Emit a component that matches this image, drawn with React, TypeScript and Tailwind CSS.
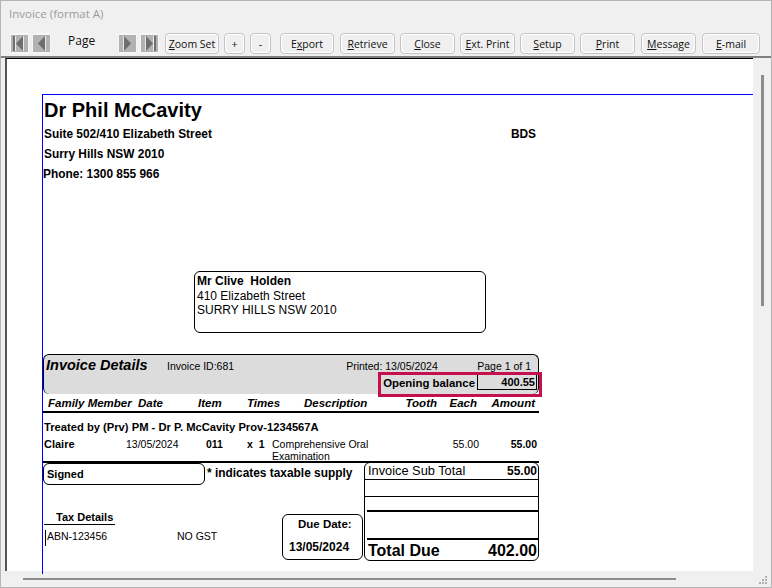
import type { ReactNode } from 'react';

function ToolButton({ width, gap, hot, before = '', after }: { width: string; gap: string; hot?: string; before?: string; after: string }) {
  return (
    <button
      type="button"
      className={`${width} ${gap} h-[21px] shrink-0 rounded-[4px] border border-[#c4c4c4] bg-[#f0f0f0] text-center font-[Open_Sans,sans-serif] text-[10.5px] leading-[18px] text-[#111] shadow-[inset_0_0_0_1px_#fff]`}
    >
      {before}
      {hot && <span className="underline">{hot}</span>}
      {after}
    </button>
  );
}

function NavIcon({ dir, stop, gap }: { dir: 'left' | 'right'; stop?: boolean; gap: string }) {
  const flip = dir === 'right';
  return (
    <div className={`${gap} flex h-[21px] w-[19px] shrink-0 items-center justify-center rounded-[2px] bg-[#f6f6f6]`}>
      <svg width="17" height="17" viewBox="0 0 17 17" className={flip ? '-scale-x-100' : ''}>
        <rect width="17" height="17" fill="#b2b2b2" />
        {stop && <rect x="2" y="1" width="2" height="15" fill="#6e6e6e" />}
        {stop && <rect x="4" y="1" width="1" height="15" fill="#eee" />}
        <path d="M5 8.5 L12 1 V16 Z" fill="#6e6e6e" />
        <path d="M12 1 h1 V16 h-1 Z" fill="#e8e8e8" />
      </svg>
    </div>
  );
}

function Rounded({ className, children }: { className: string; children?: ReactNode }) {
  return <div className={`rounded-[6px] border border-black ${className}`}>{children}</div>;
}

const headCols = 'grid grid-cols-[90px_60px_49px_57px_89px_44px_40px_58px]';
const rowCols = 'grid grid-cols-[82px_80px_41px_25px_180px_27px_58px]';

export default function App() {
  return (
    <div className="relative flex h-[588px] w-[772px] flex-col overflow-hidden border border-[#b4b4b4] bg-[#f0f0f0] font-[Liberation_Sans,Arial,sans-serif]">
      <div className="pl-[8px] pt-[4px] font-[Open_Sans,sans-serif] text-[11.5px] leading-[17px] text-[#9b9b9b]">Invoice (format A)</div>

      <div className="mt-[10px] flex h-[24px] items-start pl-[9px] pt-[1px]">
        <NavIcon dir="left" stop gap="" />
        <NavIcon dir="left" gap="ml-[3px]" />
        <div className="ml-[17px] w-[50px] shrink-0 font-[Open_Sans,sans-serif] text-[12px] leading-[16px] text-[#111]">Page</div>
        <NavIcon dir="right" gap="" />
        <NavIcon dir="right" stop gap="ml-[3px]" />
        <ToolButton width="w-[54px]" gap="ml-[6px]" hot="Z" after="oom Set" />
        <ToolButton width="w-[21px]" gap="ml-[5px]" after="+" />
        <ToolButton width="w-[21px]" gap="ml-[5px]" after="-" />
        <ToolButton width="w-[54px]" gap="ml-[9px]" before="E" hot="x" after="port" />
        <ToolButton width="w-[55px]" gap="ml-[6px]" hot="R" after="etrieve" />
        <ToolButton width="w-[55px]" gap="ml-[5px]" hot="C" after="lose" />
        <ToolButton width="w-[55px]" gap="ml-[5px]" hot="E" after="xt. Print" />
        <ToolButton width="w-[55px]" gap="ml-[5px]" hot="S" after="etup" />
        <ToolButton width="w-[55px]" gap="ml-[5px]" hot="P" after="rint" />
        <ToolButton width="w-[55px]" gap="ml-[6px]" hot="M" after="essage" />
        <ToolButton width="w-[58px]" gap="ml-[6px]" hot="E" after="-mail" />
      </div>

      <div className="flex min-h-0 flex-1 border-t-2 border-[#808080]">
        <div className="ml-[4px] w-[748px] border-l-2 border-t border-l-[#555] border-t-black bg-white">
          <div className="ml-[35px] mt-[35px] h-[480px] border-l border-t border-[#0000ff] text-black">
            <div className="pl-[1px] pt-[3px] text-[20px] font-bold leading-[24px]">Dr Phil McCavity</div>
            <div className="flex w-[493px] justify-between pl-[1px] pt-[2px] text-[11.9px] font-bold leading-[20px]">
              <span>Suite 502/410 Elizabeth Street</span>
              <span>BDS</span>
            </div>
            <div className="pl-[1px] text-[11.9px] font-bold leading-[20px]">Surry Hills NSW 2010</div>
            <div className="text-[11.9px] font-bold leading-[20px]">Phone: 1300 855 966</div>

            <Rounded className="ml-[151px] mt-[87px] h-[62px] w-[292px] px-[2px] pt-[2px] text-[12px] leading-[14.5px]">
              <div className="font-bold">Mr Clive&nbsp; Holden</div>
              <div>410 Elizabeth Street</div>
              <div>SURRY HILLS NSW 2010</div>
            </Rounded>

            <Rounded className="relative mt-[21px] h-[40px] w-[496px] border-b-0 bg-[#dcdcdc] pl-[2px]">
              <div className="flex items-baseline pr-[7px] pt-[1px] text-[10.5px] leading-[18px]">
                <span className="w-[121px] text-[14.5px] font-bold italic leading-[18px]">Invoice Details</span>
                <span>Invoice ID:681</span>
                <span className="ml-[112px]">Printed: 13/05/2024</span>
                <span className="ml-auto">Page 1 of 1</span>
              </div>
              <div className="mt-[-1px] flex justify-end pr-[1px]">
                <span className="mr-[2px] mt-[2px] text-[11.4px] font-bold leading-[15px]">Opening balance</span>
                <span className="h-[16px] w-[60px] border border-black pr-[1px] text-right text-[11px] font-bold leading-[14px]">400.55</span>
              </div>
              <div className="absolute left-[334px] top-[17px] h-[25px] w-[164px] border-[3px] border-[#c5104f]" />
            </Rounded>

            <div className={`${headCols} h-[19px] w-[496px] whitespace-nowrap border-b-2 border-black pl-[5px] text-[11.5px] font-bold italic leading-[18px]`}>
              <span>Family Member</span>
              <span>Date</span>
              <span>Item</span>
              <span>Times</span>
              <span>Description</span>
              <span className="text-right">Tooth</span>
              <span className="text-right">Each</span>
              <span className="text-right">Amount</span>
            </div>

            <div className="pl-[1px] pt-[7px] text-[11.2px] font-bold leading-[14px]">Treated by (Prv) PM - Dr P. McCavity Prov-1234567A</div>

            <div className={`${rowCols} mt-[4px] h-[25px] w-[496px] border-b-2 border-black pl-[1px] text-[10.5px] leading-[12px]`}>
              <span className="text-[11px] font-bold">Claire</span>
              <span>13/05/2024</span>
              <span className="font-bold">011</span>
              <span className="font-bold">x&nbsp; 1</span>
              <span>Comprehensive Oral<br />Examination</span>
              <span className="text-right">55.00</span>
              <span className="text-right font-bold">55.00</span>
            </div>

            <div className="flex w-[496px]">
              <div className="w-[321px]">
                <div className="flex items-center">
                  <Rounded className="h-[22px] w-[162px] pl-[3px] text-[11px] font-bold leading-[20px]">Signed</Rounded>
                  <span className="mb-[1px] ml-[2px] text-[11.9px] font-bold">* indicates taxable supply</span>
                </div>
                <div className="mt-[29px] flex">
                  <div className="w-[239px]">
                    <div className="ml-[1px] mt-[-4px] w-[71px] border-b border-black pl-[12px] text-[11px] font-bold leading-[14px]">Tax Details</div>
                    <div className="ml-[2px] mt-[5px] flex h-[16px] border-l border-black pl-[1px] text-[10.5px] leading-[13px]">
                      <span className="w-[130px]">ABN-123456</span>
                      <span>NO GST</span>
                    </div>
                  </div>
                  <Rounded className="h-[46px] w-[81px] font-bold leading-[14px]">
                    <div className="pl-[15px] pt-[2px] text-[11.5px]">Due Date:</div>
                    <div className="pl-[6px] pt-[9px] text-[12px]">13/05/2024</div>
                  </Rounded>
                </div>
              </div>
              <Rounded className="mt-[-1px] h-[99px] w-[175px]">
                <div className="flex h-[17px] items-center justify-between border-b border-black pl-[3px] pr-[1px] text-[12.8px] leading-[14px]">
                  <span>Invoice Sub Total</span>
                  <span className="text-[12px] font-bold">55.00</span>
                </div>
                <div className="h-[17px] border-b border-black" />
                <div className="ml-[2px] h-[15px] border-b-2 border-black" />
                <div className="ml-[2px] h-[28px] border-b-2 border-black" />
                <div className="flex items-center justify-between pl-[3px] pr-[1px] pt-[1px] text-[16px] font-bold leading-[20px]">
                  <span>Total Due</span>
                  <span>402.00</span>
                </div>
              </Rounded>
            </div>
          </div>
        </div>
        <div className="relative flex-1">
          <div className="absolute left-[8px] top-[17px] h-[231px] w-[3px] bg-[#8c8c8c]" />
        </div>
      </div>

      <div className="relative h-[16px] shrink-0">
        <div className="absolute left-[22px] top-[7px] h-[2px] w-[653px] bg-[#8c8c8c]" />
        <svg width="14" height="14" viewBox="0 0 14 14" className="absolute bottom-0 right-0" fill="#b0b0b0">
          <rect x="8" y="3" width="2" height="2" />
          <rect x="5" y="6" width="2" height="2" />
          <rect x="8" y="6" width="2" height="2" />
          <rect x="2" y="9" width="2" height="2" />
          <rect x="5" y="9" width="2" height="2" />
          <rect x="8" y="9" width="2" height="2" />
        </svg>
      </div>
    </div>
  );
}
